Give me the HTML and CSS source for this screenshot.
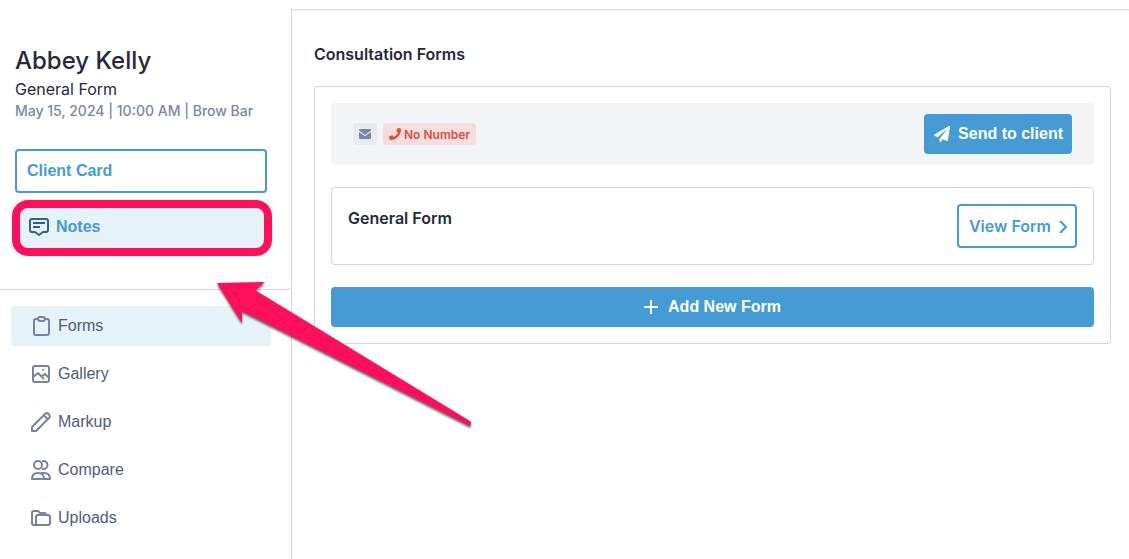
FILE: index.html
```html
<!DOCTYPE html>
<html lang="en">
<head>
<meta charset="utf-8">
<title>Consultation Forms</title>
<link rel="stylesheet" href="styles.css">
</head>
<body>
<div class="app">
  <aside class="sidebar">
    <section class="client">
      <h1 class="client-name">Abbey Kelly</h1>
      <p class="client-form">General Form</p>
      <p class="client-meta">May 15, 2024 | 10:00 AM | Brow Bar</p>
      <button class="card-button" type="button">Client Card</button>
      <div class="notes-wrap">
        <button class="notes-button" type="button">
          <svg class="icon" viewBox="0 0 20 20" fill="none" stroke="currentColor" stroke-width="2" stroke-linejoin="round"><path d="M3 2h14q2 0 2 2v9q0 2-2 2h-3l-4 3-4-3H3q-2 0-2-2V4q0-2 2-2z"/><path d="M4 6h12M4 10h7"/></svg>
          <span>Notes</span>
        </button>
        <span class="highlight"></span>
      </div>
    </section>
    <nav class="nav">
      <a class="nav-item active" href="#forms">
        <svg class="icon" viewBox="0 0 20 20" fill="none" stroke="currentColor" stroke-width="2" stroke-linejoin="round"><path d="M6 3H5q-2 0-2 2v12q0 2 2 2h11q2 0 2-2V5q0-2-2-2h-1"/><rect x="7" y="1" width="7" height="4" rx="2"/></svg>
        <span>Forms</span>
      </a>
      <a class="nav-item" href="#gallery">
        <svg class="icon" viewBox="0 0 20 20" fill="none" stroke="currentColor" stroke-width="2" stroke-linejoin="round"><rect x="2" y="2" width="16" height="16" rx="2"/><path d="M2 13l5-4 6 6M11 12l3-2 4 4"/><circle cx="12" cy="6" r="1" fill="currentColor" stroke="none"/></svg>
        <span>Gallery</span>
      </a>
      <a class="nav-item" href="#markup">
        <svg class="icon" viewBox="0 0 20 20" fill="none" stroke="currentColor" stroke-width="2" stroke-linejoin="round"><path d="M1 19v-4L14.500 1.500q1.700-1 3.300.700t.700 3.300L5 19zM13 3.500l3.500 3.500"/></svg>
        <span>Markup</span>
      </a>
      <a class="nav-item" href="#compare">
        <svg class="icon" viewBox="0 0 20 20" fill="none" stroke="currentColor" stroke-width="2" stroke-linejoin="round"><circle cx="7" cy="5" r="4"/><path d="M11 1.300a4 4 0 1 1 0 7.400M1 19q0-6 6-6t6 6zM10 13h3q6 0 6 6h-6"/></svg>
        <span>Compare</span>
      </a>
      <a class="nav-item" href="#uploads">
        <svg class="icon" viewBox="0 0 20 20" fill="none" stroke="currentColor" stroke-width="2" stroke-linejoin="round"><path d="M5 17H3q-2 0-2-2V5q0-2 2-2h4l2 2h4q2 0 2 2"/><path d="M5 17V9q0-2 2-2h10q2 0 2 2v6q0 2-2 2z"/></svg>
        <span>Uploads</span>
      </a>
    </nav>
  </aside>
  <main class="main">
    <h2 class="main-title">Consultation Forms</h2>
    <section class="panel">
      <div class="contact-bar">
        <div class="badges">
          <span class="badge badge-mail"><svg width="12" height="12" viewBox="0 0 12 12" fill="currentColor"><path d="M1 1h10q1 0 1 1v.500L6 7 0 2.500V2q0-1 1-1z"/><path d="M0 4l6 4.300L12 4v6q0 1-1 1H1q-1 0-1-1z"/></svg></span>
          <span class="badge badge-phone"><svg width="12" height="12" viewBox="0 0 512 512" fill="currentColor"><path d="M493 25L389 1c-11-3-23 3-27 14l-48 112c-4 10-2 21 7 28l61 50c-36 77-99 140-177 177l-50-61c-7-8-18-11-28-7L15 362c-11 5-17 16-14 27l24 104c2 11 12 19 23 19 257 0 464-208 464-464 0-11-8-21-19-23z"/></svg>No Number</span>
        </div>
        <button class="button-primary send" type="button">
          <svg width="16" height="16" viewBox="0 0 512 512" fill="currentColor"><path d="M476 3L12 271c-18 10-16 35 2 43l107 45L409 105c5-5 13 2 8 8L176 407v80c0 24 28 33 42 16l64-78 125 53c14 6 31-3 33-18l72-432c3-20-18-35-36-25z"/></svg>
          <span>Send to client</span>
        </button>
      </div>
      <article class="form-card">
        <h3 class="form-name">General Form</h3>
        <button class="view-button" type="button">
          <span>View Form</span>
          <svg width="10" height="14" viewBox="0 0 10 14" fill="none" stroke="currentColor" stroke-width="2"><path d="M2 2l6 6-6 6"/></svg>
        </button>
      </article>
      <button class="button-primary add" type="button">
        <svg width="14" height="14" viewBox="0 0 14 14" fill="none" stroke="currentColor" stroke-width="2"><path d="M7 0v14M0 7h14"/></svg>
        <span>Add New Form</span>
      </button>
    </section>
  </main>
  <svg class="pointer" width="270" height="160" viewBox="210 275 270 160"><path d="M217 283L265 282 255 290 470 421q2 2 0 5L242 311l0 12z" fill="#ff0f5b"/></svg>
</div>
</body>
</html>
```
FILE: styles.css
```css
* { box-sizing: border-box; }
body {
  margin: 0;
  background: #fff;
  color: #252a3a;
  font-family: Inter, "Liberation Sans", sans-serif;
}
h1, h2, h3, p { margin: 0; }
button {
  font-family: "Liberation Sans", Arial, sans-serif;
  font-size: 16px;
  font-weight: 700;
  cursor: pointer;
}
.app {
  position: relative;
  display: flex;
  min-height: 100vh;
  padding-top: 9px;
}
.sidebar {
  flex: 0 0 292px;
  border-right: 1px solid #d1d5e0;
}
.client {
  display: flex;
  flex-direction: column;
  padding: 36px 24px 40px 15px;
  border-bottom: 1px solid #d1d5e0;
  border-bottom-right-radius: 4px;
}
.client-name { font-size: 24px; line-height: 32px; font-weight: 500; }
.client-form { font-size: 16px; line-height: 24px; }
.client-meta { font-size: 14px; line-height: 20px; font-weight: 500; color: #7b86a5; }
.card-button {
  height: 44px;
  margin-top: 28px;
  padding: 0 10px;
  border: 2px solid #459bd3;
  border-radius: 4px;
  background: #fff;
  color: #459bd3;
  text-align: left;
}
.notes-wrap { position: relative; margin-top: 12px; }
.notes-button {
  display: flex;
  align-items: center;
  gap: 7px;
  width: 100%;
  height: 44px;
  padding: 0 14px;
  border: 0;
  border-radius: 4px;
  background: #e5f2f8;
  color: #459bd3;
}
.notes-button .icon { color: #2b6389; }
.highlight {
  position: absolute;
  inset: -5px -5px -7px -3px;
  border: 8px solid #ff0f5b;
  border-radius: 16px;
  pointer-events: none;
}
.icon { flex: none; width: 20px; height: 20px; }
.nav {
  display: flex;
  flex-direction: column;
  gap: 8px;
  padding: 16px 20px 0 11px;
}
.nav-item {
  display: flex;
  align-items: center;
  gap: 7px;
  height: 40px;
  padding: 0 20px;
  border-radius: 4px;
  color: #505b7a;
  font: 16px "Liberation Sans", Arial, sans-serif;
  text-decoration: none;
}
.nav-item .icon { color: #7582a4; }
.nav-item.active { background: #e5f2f8; }
.main {
  flex: 1;
  padding: 34px 18px 24px 22px;
  border-top: 1px solid #dfe1e6;
  box-shadow: inset 0 1px 1px #f0f1f3;
}
.main-title { font-size: 16px; line-height: 20px; font-weight: 600; }
.panel {
  display: flex;
  flex-direction: column;
  gap: 22px;
  margin-top: 22px;
  padding: 16px;
  border: 1px solid #d1d5e0;
  border-radius: 4px;
}
.contact-bar {
  display: flex;
  align-items: center;
  justify-content: space-between;
  padding: 11px 22px;
  border-radius: 4px;
  background: #f3f4f6;
}
.badges { display: flex; gap: 6px; }
.badge {
  display: flex;
  align-items: center;
  gap: 3px;
  height: 22px;
  padding: 0 6px;
  border-radius: 4px;
  font-size: 12px;
  font-weight: 600;
}
.badge-mail { background: #e7eaef; color: #7b86a5; }
.badge-phone { background: #f3dedd; color: #d9503f; }
.button-primary {
  display: flex;
  align-items: center;
  justify-content: center;
  height: 40px;
  border: 0;
  border-radius: 4px;
  background: #459bd3;
  color: #fff;
}
.send { gap: 8px; padding: 0 9px 0 10px; }
.add { gap: 10px; }
.form-card {
  display: flex;
  align-items: flex-start;
  justify-content: space-between;
  padding: 16px;
  border: 1px solid #d1d5e0;
  border-radius: 4px;
}
.form-name { padding-top: 4px; font-size: 16px; line-height: 20px; font-weight: 600; }
.view-button {
  display: flex;
  align-items: center;
  gap: 7px;
  height: 44px;
  padding: 0 7px 0 10px;
  border: 2px solid #459bd3;
  border-radius: 4px;
  background: #fff;
  color: #459bd3;
  font-family: Inter, sans-serif;
  font-weight: 600;
}
.pointer {
  position: absolute;
  left: 210px;
  top: 275px;
  filter: drop-shadow(0 2px 1px rgba(0, 0, 0, 0.6));
  pointer-events: none;
}
```
